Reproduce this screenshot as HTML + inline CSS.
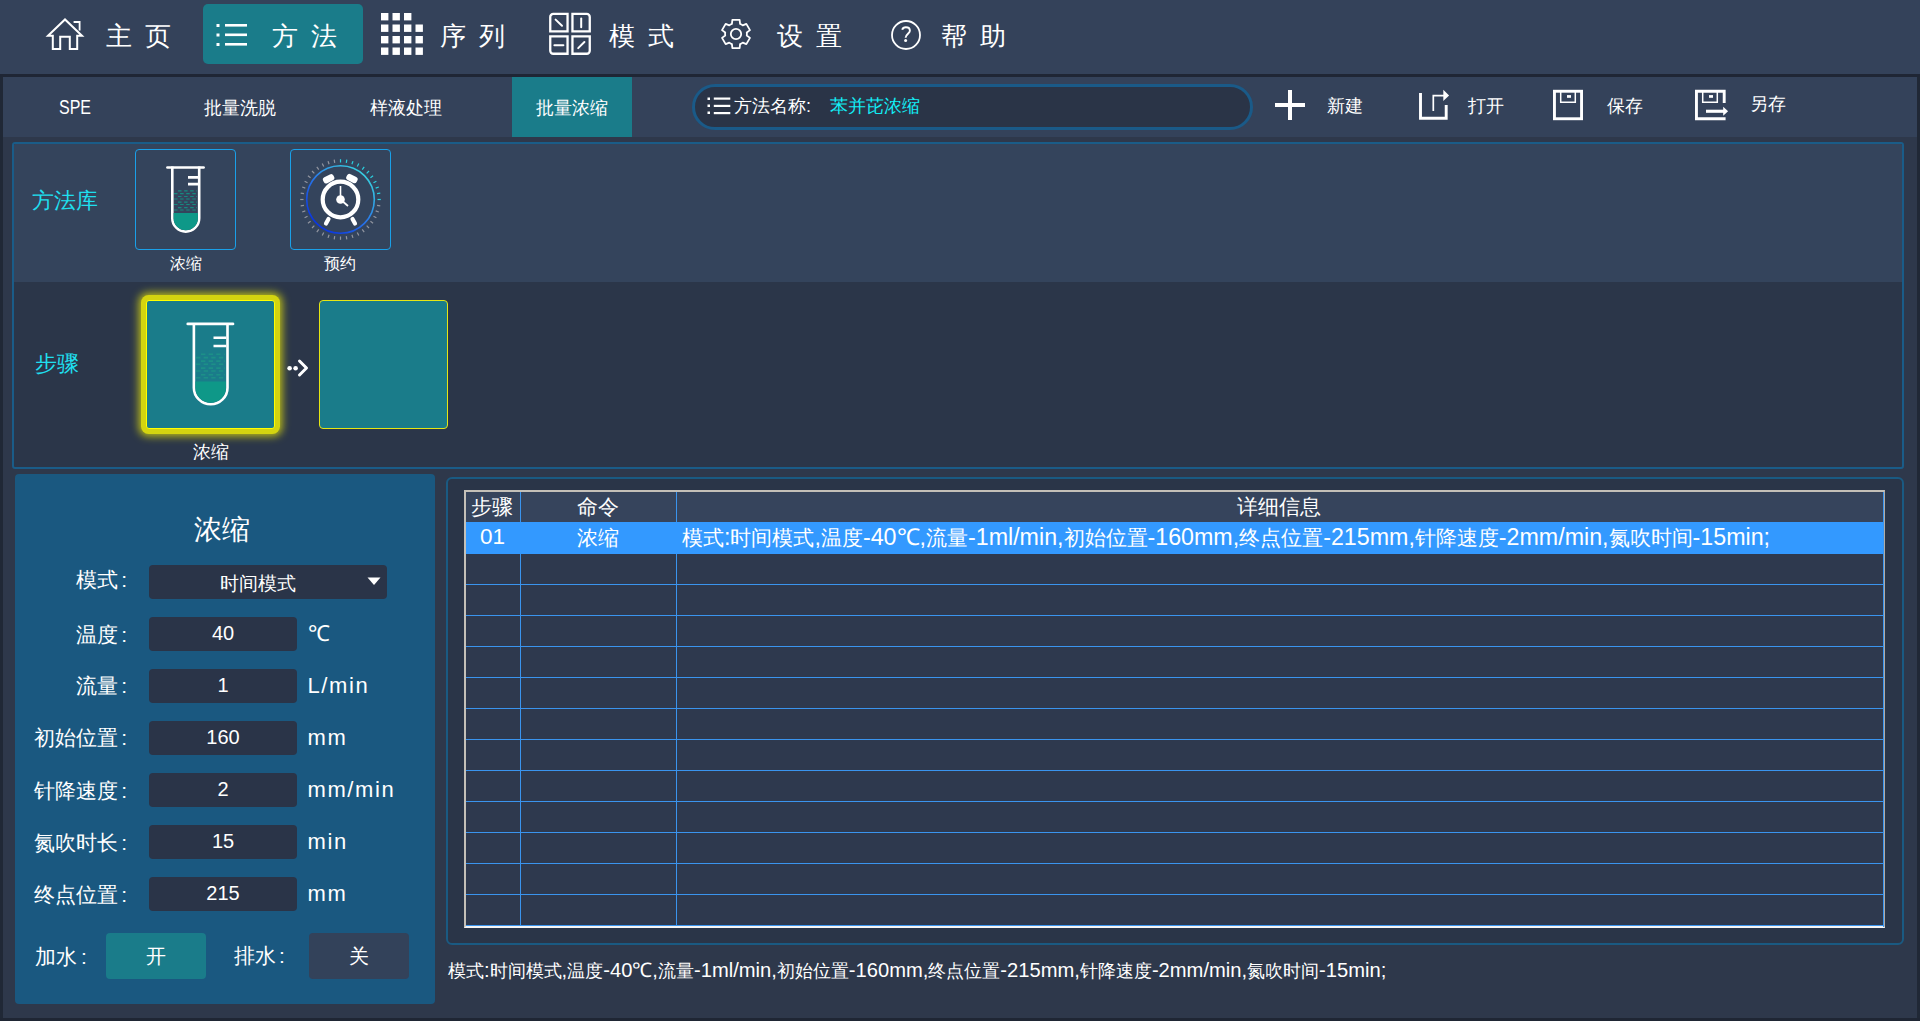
<!DOCTYPE html>
<html><head><meta charset="utf-8">
<style>
*{margin:0;padding:0;box-sizing:border-box}
html,body{width:1920px;height:1021px;overflow:hidden;background:#2e384b;font-family:"Liberation Sans",sans-serif;color:#fff}
.a{position:absolute}
.t{position:absolute;white-space:nowrap;line-height:1}
#nav{left:0;top:0;width:1920px;height:74px;background:#34425a}
#sep{left:0;top:74px;width:1920px;height:3px;background:#1f2635}
#tabs{left:3px;top:77px;width:1914px;height:60px;background:#34425a}
.navt{font-size:26px;letter-spacing:13px;top:23px}
.sub{font-size:18px;top:99px}
.lab{font-size:21px}
.fld{background:#2a3448;border-radius:4px}
.val{font-size:20px}
.unit{font-size:22px;letter-spacing:1.6px}
.co{margin-left:3px}
.gl{background:#3a94ee}
.th{font-size:21px}
.td{font-size:21px}
.l{font-size:1.107em}
#stat .l{font-size:1.12em}
</style></head><body>
<div class="a" style="left:0;top:0;width:3px;height:1021px;background:#202836"></div>
<div class="a" style="left:1917px;top:77px;width:3px;height:944px;background:#202836"></div>
<div class="a" style="left:0;top:1018px;width:1920px;height:3px;background:#1f2634"></div>
<div id="nav" class="a"></div>
<div id="sep" class="a"></div>
<div id="tabs" class="a"></div>

<!-- top nav -->
<svg class="a" style="left:45px;top:16px" width="40" height="36" viewBox="0 0 40 36">
 <path d="M3 19.7 L20 3.5 L37 19.7 H32.2 V32.9 H24.8 V20.8 H15.2 V32.9 H7.8 V19.7 Z" fill="none" stroke="#fff" stroke-width="2" stroke-linejoin="miter"/>
 <path d="M28.6 6 H34.6 V14.5" fill="none" stroke="#fff" stroke-width="1.8"/>
</svg>
<div class="t navt" style="left:106px;top:23px">主页</div>

<div class="a" style="left:203px;top:4px;width:160px;height:60px;background:#1a7c8a;border-radius:5px"></div>
<svg class="a" style="left:216px;top:23px" width="32" height="24" viewBox="0 0 32 24">
 <rect x="0.5" y="1" width="3" height="3" fill="#fff"/><rect x="0.5" y="10.5" width="3" height="3" fill="#fff"/><rect x="0.5" y="20" width="3" height="3" fill="#fff"/>
 <rect x="9" y="1" width="22" height="2.6" fill="#fff"/><rect x="9" y="10.5" width="22" height="2.6" fill="#fff"/><rect x="9" y="20" width="22" height="2.6" fill="#fff"/>
</svg>
<div class="t navt" style="left:272px">方法</div>

<svg class="a" style="left:381px;top:13px" width="43" height="43" viewBox="0 0 43 43">
 <g fill="#fff">
 <rect x="0" y="0" width="7.4" height="7.4"/><rect x="11.5" y="0" width="7.4" height="7.4"/><rect x="23" y="0" width="7.4" height="7.4"/>
 <rect x="0" y="11.5" width="7.4" height="7.4"/><rect x="11.5" y="11.5" width="7.4" height="7.4"/><rect x="23" y="11.5" width="7.4" height="7.4"/><rect x="34.5" y="11.5" width="7.4" height="7.4"/>
 <rect x="0" y="23" width="7.4" height="7.4"/><rect x="11.5" y="23" width="7.4" height="7.4"/><rect x="23" y="23" width="7.4" height="7.4"/><rect x="34.5" y="23" width="7.4" height="7.4"/>
 <rect x="0" y="34.5" width="7.4" height="7.4"/><rect x="11.5" y="34.5" width="7.4" height="7.4"/><rect x="23" y="34.5" width="7.4" height="7.4"/><rect x="34.5" y="34.5" width="7.4" height="7.4"/>
 </g>
</svg>
<div class="t navt" style="left:440px">序列</div>

<svg class="a" style="left:548px;top:12px" width="44" height="44" viewBox="0 0 44 44">
 <g fill="none" stroke="#fff" stroke-width="2.3">
 <path d="M2.25 19.35 V5 A3 3 0 0 1 5.25 1.95 H19.55 V19.35 Z"/>
 <path d="M24.45 1.95 H38.75 A3 3 0 0 1 41.75 4.95 V19.35 H24.45 Z"/>
 <path d="M2.25 24.45 H19.55 V41.75 H5.25 A3 3 0 0 1 2.25 38.75 Z"/>
 <path d="M24.45 24.45 H41.75 V38.75 A3 3 0 0 1 38.75 41.75 H24.45 Z"/>
 </g>
 <g fill="none" stroke="#fff" stroke-width="2" stroke-linecap="round">
 <path d="M7.6 7.6 L14 13.7"/><path d="M33.2 6.4 V15.2"/><path d="M6.4 33.2 H15.4"/><path d="M30.2 36.1 L36.4 30"/>
 </g>
</svg>
<div class="t navt" style="left:609px">模式</div>

<svg class="a" style="left:719px;top:17px" width="34" height="34" viewBox="0 0 34 34">
 <path fill="none" stroke="#fff" stroke-width="1.8" stroke-linejoin="round" d="M12.92 6.89 L13.37 2.96 L20.63 2.96 L21.08 6.89 A10.90 10.90 0 0 1 23.71 8.41 L27.34 6.84 L30.97 13.13 L27.79 15.48 A10.90 10.90 0 0 1 27.79 18.52 L30.97 20.87 L27.34 27.16 L23.71 25.59 A10.90 10.90 0 0 1 21.08 27.11 L20.63 31.04 L13.37 31.04 L12.92 27.11 A10.90 10.90 0 0 1 10.29 25.59 L6.66 27.16 L3.03 20.87 L6.21 18.52 A10.90 10.90 0 0 1 6.21 15.48 L3.03 13.13 L6.66 6.84 L10.29 8.41 A10.90 10.90 0 0 1 12.92 6.89 Z"/>
 <circle cx="17" cy="17" r="5.2" fill="none" stroke="#fff" stroke-width="1.8"/>
</svg>
<div class="t navt" style="left:777px">设置</div>

<svg class="a" style="left:889px;top:18px" width="34" height="34" viewBox="0 0 34 34">
 <circle cx="17" cy="17" r="14" fill="none" stroke="#fff" stroke-width="1.8"/>
 <path d="M13.2 11.8 C13.7 10 15.2 9.3 16.9 9.3 C19.2 9.3 20.9 10.6 20.9 12.7 C20.9 15.4 16.6 16.3 16.6 19.8" fill="none" stroke="#fff" stroke-width="1.9"/>
 <circle cx="16.6" cy="22.6" r="1.5" fill="#fff"/>
</svg>
<div class="t navt" style="left:941px">帮助</div>

<!-- sub tabs -->
<div class="t sub" style="left:59px;top:97px;font-size:20px;transform:scaleX(0.8);transform-origin:0 0">SPE</div>
<div class="t sub" style="left:204px">批量洗脱</div>
<div class="t sub" style="left:370px">样液处理</div>
<div class="a" style="left:512px;top:77px;width:120px;height:60px;background:#1a7c8a"></div>
<div class="t sub" style="left:536px">批量浓缩</div>


<!-- method name pill -->
<div class="a" style="left:692px;top:84px;width:561px;height:46px;border:3px solid #1a5a88;border-radius:23px;background:#2a3447"></div>
<svg class="a" style="left:706px;top:96px" width="26" height="19" viewBox="0 0 26 19">
 <g fill="#fff"><rect x="1.5" y="1.5" width="2.5" height="2.5"/><rect x="1.5" y="8.5" width="2.5" height="2.5"/><rect x="1.5" y="15.5" width="2.5" height="2.5"/>
 <rect x="7.8" y="1.5" width="16.5" height="2.2"/><rect x="7.8" y="8.8" width="16.5" height="2.2"/><rect x="7.8" y="16" width="16.5" height="2.2"/></g>
</svg>
<div class="t" style="left:734px;top:97px;font-size:18px">方法名称:</div>
<div class="t" style="left:830px;top:97px;font-size:18px;color:#12eef6">苯并芘浓缩</div>

<!-- toolbar -->
<svg class="a" style="left:1275px;top:90px" width="30" height="30" viewBox="0 0 30 30"><rect x="13" y="0" width="4" height="30" fill="#fff"/><rect x="0" y="13" width="30" height="4" fill="#fff"/></svg>
<div class="t" style="left:1327px;top:97px;font-size:18px">新建</div>
<svg class="a" style="left:1410px;top:84px" width="44" height="40" viewBox="0 0 44 40">
 <path d="M10.5 9 V34.3 H36.2 V21" fill="none" stroke="#fff" stroke-width="2.9"/>
 <path d="M23.3 27 V11.6 H34" fill="none" stroke="#fff" stroke-width="1.7"/>
 <path d="M33.3 5.8 L39.1 11.5 L33.3 17.1 Z" fill="#fff"/>
</svg>
<div class="t" style="left:1468px;top:97px;font-size:18px">打开</div>
<svg class="a" style="left:1545px;top:84px" width="44" height="40" viewBox="0 0 44 40">
 <rect x="9.45" y="7.25" width="27.1" height="27.5" fill="none" stroke="#fff" stroke-width="2.9"/>
 <path d="M15.7 8 V18.2 H30.3 V8" fill="none" stroke="#fff" stroke-width="1.5"/>
 <rect x="22" y="11.1" width="4" height="2.7" fill="#fff"/>
</svg>
<div class="t" style="left:1607px;top:97px;font-size:18px">保存</div>
<svg class="a" style="left:1688px;top:84px" width="46" height="40" viewBox="0 0 46 40">
 <path d="M36.2 19 V7.25 H8.45 V34.7 H37.6" fill="none" stroke="#fff" stroke-width="2.9"/>
 <path d="M14.7 8 V18.2 H29.3 V8" fill="none" stroke="#fff" stroke-width="1.5"/>
 <rect x="21" y="11.1" width="4" height="2.7" fill="#fff"/>
 <rect x="18" y="25.7" width="18" height="3.1" fill="#fff"/>
 <path d="M35.2 22.8 L40.1 27.25 L35.2 31.7 Z" fill="#fff"/>
</svg>
<div class="t" style="left:1750px;top:95px;font-size:18px">另存</div>

<!-- library / steps panel -->
<div class="a" style="left:12px;top:142px;width:1892px;height:327px;border:2px solid #1a5c88;border-radius:3px;background:#2b3649;overflow:hidden">
 <div class="a" style="left:0;top:0;width:1888px;height:138px;background:#34445c"></div>
</div>
<div class="t" style="left:32px;top:190px;font-size:22px;color:#1fdfee">方法库</div>
<div class="a" style="left:135px;top:149px;width:101px;height:101px;border:1.3px solid #1aa0e8;border-radius:4px"></div>
<svg class="a" style="left:166px;top:163px" width="40" height="70" viewBox="0 0 40 70">
 <path d="M1.45 4.5 H37.55" stroke="#fff" stroke-width="2.7" stroke-linecap="round"/>
 <path d="M6.3 3.5 V55.15 A13.45 13.45 0 0 0 33.2 55.15 V3.5" fill="none" stroke="#fff" stroke-width="2.6"/>
 <path d="M22 14.4 H32.2 M22 21.1 H32.2" stroke="#fff" stroke-width="2.6"/>
 <path d="M7.6 50 H31.9 V55.15 A12.15 12.15 0 0 1 7.6 55.15 Z" fill="#0e9888"/>
 <g stroke="#168a80" stroke-width="1.2" stroke-dasharray="3.5 2.6">
  <path d="M12 27.9 H31"/><path d="M8 30.6 H32" stroke-dashoffset="0"/><path d="M12 33.5 H31"/><path d="M8 36 H32"/>
  <path d="M12 39.2 H31"/><path d="M8 41.5 H32"/><path d="M12 44.6 H31"/><path d="M8 47 H32"/>
 </g>
</svg>
<div class="t" style="left:170px;top:255.5px;font-size:16px">浓缩</div>
<div class="a" style="left:290px;top:149px;width:101px;height:101px;border:1.3px solid #1aa0e8;border-radius:4px"></div>
<svg class="a" style="left:290px;top:149px" width="101" height="101" viewBox="0 0 101 101">
 <defs><linearGradient id="rg" x1="0.85" y1="0.1" x2="0.2" y2="0.9"><stop offset="0" stop-color="#38d0e0"/><stop offset="0.5" stop-color="#2a7ae8"/><stop offset="1" stop-color="#0a36e0"/></linearGradient></defs>
 <line x1="50.50" y1="13.50" x2="50.50" y2="10.20" stroke="#2ad0e0" stroke-width="1.2"/>
 <line x1="56.29" y1="13.96" x2="56.80" y2="10.70" stroke="#2ad0e0" stroke-width="1.2"/>
 <line x1="61.93" y1="15.31" x2="62.95" y2="12.17" stroke="#2ad0e0" stroke-width="1.2"/>
 <line x1="67.30" y1="17.53" x2="68.80" y2="14.59" stroke="#2ad0e0" stroke-width="1.2"/>
 <line x1="72.25" y1="20.57" x2="74.19" y2="17.90" stroke="#2ad0e0" stroke-width="1.2"/>
 <line x1="76.66" y1="24.34" x2="79.00" y2="22.00" stroke="#2ad0e0" stroke-width="1.2"/>
 <line x1="80.43" y1="28.75" x2="83.10" y2="26.81" stroke="#2ad0e0" stroke-width="1.2"/>
 <line x1="83.47" y1="33.70" x2="86.41" y2="32.20" stroke="#2ad0e0" stroke-width="1.2"/>
 <line x1="85.69" y1="39.07" x2="88.83" y2="38.05" stroke="#2ad0e0" stroke-width="1.2"/>
 <line x1="87.04" y1="44.71" x2="90.30" y2="44.20" stroke="#2ad0e0" stroke-width="1.2"/>
 <line x1="87.50" y1="50.50" x2="90.80" y2="50.50" stroke="#2ad0e0" stroke-width="1.2"/>
 <line x1="87.04" y1="56.29" x2="90.30" y2="56.80" stroke="#9296a0" stroke-width="1.2"/>
 <line x1="85.69" y1="61.93" x2="88.83" y2="62.95" stroke="#9296a0" stroke-width="1.2"/>
 <line x1="83.47" y1="67.30" x2="86.41" y2="68.80" stroke="#9296a0" stroke-width="1.2"/>
 <line x1="80.43" y1="72.25" x2="83.10" y2="74.19" stroke="#9296a0" stroke-width="1.2"/>
 <line x1="76.66" y1="76.66" x2="79.00" y2="79.00" stroke="#9296a0" stroke-width="1.2"/>
 <line x1="72.25" y1="80.43" x2="74.19" y2="83.10" stroke="#9296a0" stroke-width="1.2"/>
 <line x1="67.30" y1="83.47" x2="68.80" y2="86.41" stroke="#9296a0" stroke-width="1.2"/>
 <line x1="61.93" y1="85.69" x2="62.95" y2="88.83" stroke="#9296a0" stroke-width="1.2"/>
 <line x1="56.29" y1="87.04" x2="56.80" y2="90.30" stroke="#9296a0" stroke-width="1.2"/>
 <line x1="50.50" y1="87.50" x2="50.50" y2="90.80" stroke="#9296a0" stroke-width="1.2"/>
 <line x1="44.71" y1="87.04" x2="44.20" y2="90.30" stroke="#9296a0" stroke-width="1.2"/>
 <line x1="39.07" y1="85.69" x2="38.05" y2="88.83" stroke="#9296a0" stroke-width="1.2"/>
 <line x1="33.70" y1="83.47" x2="32.20" y2="86.41" stroke="#9296a0" stroke-width="1.2"/>
 <line x1="28.75" y1="80.43" x2="26.81" y2="83.10" stroke="#9296a0" stroke-width="1.2"/>
 <line x1="24.34" y1="76.66" x2="22.00" y2="79.00" stroke="#9296a0" stroke-width="1.2"/>
 <line x1="20.57" y1="72.25" x2="17.90" y2="74.19" stroke="#9296a0" stroke-width="1.2"/>
 <line x1="17.53" y1="67.30" x2="14.59" y2="68.80" stroke="#9296a0" stroke-width="1.2"/>
 <line x1="15.31" y1="61.93" x2="12.17" y2="62.95" stroke="#9296a0" stroke-width="1.2"/>
 <line x1="13.96" y1="56.29" x2="10.70" y2="56.80" stroke="#9296a0" stroke-width="1.2"/>
 <line x1="13.50" y1="50.50" x2="10.20" y2="50.50" stroke="#9296a0" stroke-width="1.2"/>
 <line x1="13.96" y1="44.71" x2="10.70" y2="44.20" stroke="#9296a0" stroke-width="1.2"/>
 <line x1="15.31" y1="39.07" x2="12.17" y2="38.05" stroke="#9296a0" stroke-width="1.2"/>
 <line x1="17.53" y1="33.70" x2="14.59" y2="32.20" stroke="#9296a0" stroke-width="1.2"/>
 <line x1="20.57" y1="28.75" x2="17.90" y2="26.81" stroke="#9296a0" stroke-width="1.2"/>
 <line x1="24.34" y1="24.34" x2="22.00" y2="22.00" stroke="#9296a0" stroke-width="1.2"/>
 <line x1="28.75" y1="20.57" x2="26.81" y2="17.90" stroke="#9296a0" stroke-width="1.2"/>
 <line x1="33.70" y1="17.53" x2="32.20" y2="14.59" stroke="#9296a0" stroke-width="1.2"/>
 <line x1="39.07" y1="15.31" x2="38.05" y2="12.17" stroke="#9296a0" stroke-width="1.2"/>
 <line x1="44.71" y1="13.96" x2="44.20" y2="10.70" stroke="#9296a0" stroke-width="1.2"/>
 <circle cx="50.5" cy="50.5" r="33.8" fill="none" stroke="url(#rg)" stroke-width="1.6"/>
 <circle cx="50.5" cy="50.5" r="17.8" fill="none" stroke="#fff" stroke-width="4.2"/>
 <rect x="-6" y="-3.2" width="11.5" height="6.6" rx="2.6" fill="#fff" transform="translate(38.8 29.6) rotate(-27)"/>
 <rect x="-6" y="-3.2" width="11.5" height="6.6" rx="2.6" fill="#fff" transform="translate(62.2 29.6) rotate(27)"/>
 <path d="M38.5 70 L36 74.5" stroke="#fff" stroke-width="4.2" stroke-linecap="round"/>
 <path d="M62.5 70 L65 74.5" stroke="#fff" stroke-width="4.2" stroke-linecap="round"/>
 <path d="M50.5 50.5 V37" stroke="#fff" stroke-width="1.6"/>
 <path d="M50.5 50.5 L58 57" stroke="#fff" stroke-width="1.8"/>
 <circle cx="50.5" cy="50.5" r="4.3" fill="#fff"/>
</svg>
<div class="t" style="left:324px;top:255.5px;font-size:16px">预约</div>

<div class="t" style="left:35px;top:352.5px;font-size:22px;color:#1fdfee">步骤</div>
<div class="a" style="left:146px;top:300px;width:129px;height:129px;border:1.2px solid #ffff00;border-radius:3px;background:#1a7c8a;box-shadow:0 0 0 5px #d4d410,0 0 9px 7px rgba(212,212,16,0.9)"></div>
<svg class="a" style="left:185.5px;top:320px" width="50" height="86" viewBox="0 0 40 70" preserveAspectRatio="none">
 <path d="M1.45 3.2 H37.55" stroke="#fff" stroke-width="2.3" stroke-linecap="round"/>
 <path d="M6.3 3.5 V55.15 A13.45 13.45 0 0 0 33.2 55.15 V3.5" fill="none" stroke="#fff" stroke-width="2.1"/>
 <path d="M22 14.4 H32.2 M22 21.1 H32.2" stroke="#fff" stroke-width="2.1"/>
 <path d="M7.6 50 H31.9 V55.15 A12.15 12.15 0 0 1 7.6 55.15 Z" fill="#0e9888"/>
 <g stroke="#1c9088" stroke-width="1.3" stroke-dasharray="3.5 2.6">
  <path d="M12 27.9 H31"/><path d="M8 30.6 H32" stroke-dashoffset="0"/><path d="M12 33.5 H31"/><path d="M8 36 H32"/>
  <path d="M12 39.2 H31"/><path d="M8 41.5 H32"/><path d="M12 44.6 H31"/><path d="M8 47 H32"/>
 </g>
</svg>
<svg class="a" style="left:284px;top:358px" width="26" height="20" viewBox="0 0 26 20">
 <circle cx="5.6" cy="10.2" r="2.3" fill="#fff"/><circle cx="11.6" cy="10.2" r="2.3" fill="#fff"/>
 <path d="M15.5 3 L22.5 10 L15.5 17" fill="none" stroke="#fff" stroke-width="3" stroke-linecap="round" stroke-linejoin="round"/>
</svg>
<div class="a" style="left:319px;top:300px;width:129px;height:129px;border:1.4px solid #e6e614;border-radius:4px;background:#1a7c8a"></div>
<div class="t" style="left:193px;top:442.5px;font-size:18px">浓缩</div>

<!-- left parameter panel -->
<div class="a" style="left:15px;top:474px;width:420px;height:530px;background:#1a5880;border-radius:4px"></div>
<div class="t" style="left:194px;top:515.5px;font-size:28px">浓缩</div>
<div class="t lab" style="right:1793px;top:569px">模式<span class="co">:</span></div>
<div class="a fld" style="left:149px;top:565px;width:238px;height:34px"></div>
<div class="t val" style="left:220px;top:573.5px;font-size:19px">时间模式</div>
<svg class="a" style="left:367px;top:577px" width="14" height="9" viewBox="0 0 14 9"><path d="M0.5 0.5 H13.5 L7 8 Z" fill="#fff"/></svg>
<div class="t lab" style="right:1793px;top:623.5px">温度<span class="co">:</span></div>
<div class="a fld" style="left:149px;top:617px;width:148px;height:34px"></div>
<div class="t val" style="left:149px;width:148px;text-align:center;top:623px">40</div>
<div class="t unit" style="left:307.5px;top:623px">℃</div>
<div class="t lab" style="right:1793px;top:675px">流量<span class="co">:</span></div>
<div class="a fld" style="left:149px;top:669px;width:148px;height:34px"></div>
<div class="t val" style="left:149px;width:148px;text-align:center;top:675px">1</div>
<div class="t unit" style="left:307.5px;top:675px">L/min</div>
<div class="t lab" style="right:1793px;top:726.5px">初始位置<span class="co">:</span></div>
<div class="a fld" style="left:149px;top:721px;width:148px;height:34px"></div>
<div class="t val" style="left:149px;width:148px;text-align:center;top:727px">160</div>
<div class="t unit" style="left:307.5px;top:727px">mm</div>
<div class="t lab" style="right:1793px;top:779.5px">针降速度<span class="co">:</span></div>
<div class="a fld" style="left:149px;top:773px;width:148px;height:34px"></div>
<div class="t val" style="left:149px;width:148px;text-align:center;top:779px">2</div>
<div class="t unit" style="left:307.5px;top:779px">mm/min</div>
<div class="t lab" style="right:1793px;top:831.5px">氮吹时长<span class="co">:</span></div>
<div class="a fld" style="left:149px;top:825px;width:148px;height:34px"></div>
<div class="t val" style="left:149px;width:148px;text-align:center;top:831px">15</div>
<div class="t unit" style="left:307.5px;top:831px">min</div>
<div class="t lab" style="right:1793px;top:883.5px">终点位置<span class="co">:</span></div>
<div class="a fld" style="left:149px;top:877px;width:148px;height:34px"></div>
<div class="t val" style="left:149px;width:148px;text-align:center;top:883px">215</div>
<div class="t unit" style="left:307.5px;top:883px">mm</div>
<div class="t lab" style="left:35px;top:946px">加水<span class="co" style="margin-left:4px">:</span></div>
<div class="a" style="left:106px;top:933px;width:100px;height:46px;background:#1a7c8a;border-radius:4px"></div>
<div class="t" style="left:106px;width:100px;text-align:center;top:946px;font-size:20px">开</div>
<div class="t lab" style="left:234px;top:945px">排水<span class="co">:</span></div>
<div class="a" style="left:309px;top:933px;width:100px;height:46px;background:#33425a;border-radius:4px"></div>
<div class="t" style="left:309px;width:100px;text-align:center;top:946px;font-size:20px">关</div>

<!-- table panel -->
<div class="a" style="left:446px;top:477px;width:1458px;height:468px;border:2px solid #1a5a82;border-radius:6px;background:#2a3548"></div>
<div class="a" style="left:464px;top:490px;width:1421px;height:438px;background:#2e394e;border-top:2px solid #c4c0b8;border-left:2px solid #c4c0b8;border-bottom:2px solid #f4f4f4;border-right:1px solid #b0aca4"></div>
<div class="a" style="left:466px;top:492px;width:1418px;height:30px;background:#36445c"></div>
<div class="a" style="left:466px;top:522px;width:1418px;height:32px;background:#3399ff"></div>
<div class="a gl" style="left:466px;top:584.0px;width:1418px;height:1.4px"></div>
<div class="a gl" style="left:466px;top:615.0px;width:1418px;height:1.4px"></div>
<div class="a gl" style="left:466px;top:646.0px;width:1418px;height:1.4px"></div>
<div class="a gl" style="left:466px;top:677.0px;width:1418px;height:1.4px"></div>
<div class="a gl" style="left:466px;top:708.0px;width:1418px;height:1.4px"></div>
<div class="a gl" style="left:466px;top:739.0px;width:1418px;height:1.4px"></div>
<div class="a gl" style="left:466px;top:770.0px;width:1418px;height:1.4px"></div>
<div class="a gl" style="left:466px;top:801.0px;width:1418px;height:1.4px"></div>
<div class="a gl" style="left:466px;top:832.0px;width:1418px;height:1.4px"></div>
<div class="a gl" style="left:466px;top:863.0px;width:1418px;height:1.4px"></div>
<div class="a gl" style="left:466px;top:894.0px;width:1418px;height:1.4px"></div>
<div class="a gl" style="left:466px;top:925.0px;width:1418px;height:1.4px"></div>
<div class="a gl" style="left:520px;top:492px;width:1.4px;height:30px"></div>
<div class="a gl" style="left:676px;top:492px;width:1.4px;height:30px"></div>
<div class="a gl" style="left:520px;top:554px;width:1.4px;height:372px"></div>
<div class="a gl" style="left:676px;top:554px;width:1.4px;height:372px"></div>
<div class="a gl" style="left:1883px;top:492px;width:1.4px;height:435px"></div>
<div class="t th" style="left:471px;top:495.5px">步骤</div>
<div class="t th" style="left:577px;top:495.5px">命令</div>
<div class="t th" style="left:1237px;top:495.5px">详细信息</div>
<div class="t td" style="left:480px;top:525.5px;font-size:22.5px">01</div>
<div class="t td" style="left:577px;top:527px">浓缩</div>
<div class="t td" id="det" style="left:682px;top:526px">模式<span class="l">:</span>时间模式<span class="l">,</span>温度<span class="l">-40℃,</span>流量<span class="l">-1ml/min,</span>初始位置<span class="l">-160mm,</span>终点位置<span class="l">-215mm,</span>针降速度<span class="l">-2mm/min,</span>氮吹时间<span class="l">-15min;</span></div>
<div class="t" id="stat" style="left:448px;top:960px;font-size:18px">模式<span class="l">:</span>时间模式<span class="l">,</span>温度<span class="l">-40℃,</span>流量<span class="l">-1ml/min,</span>初始位置<span class="l">-160mm,</span>终点位置<span class="l">-215mm,</span>针降速度<span class="l">-2mm/min,</span>氮吹时间<span class="l">-15min;</span></div>
</body></html>
